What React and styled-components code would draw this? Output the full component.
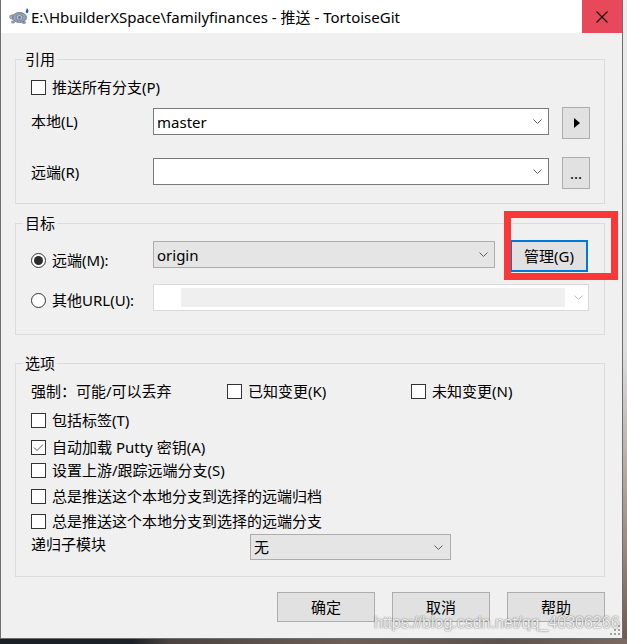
import React from "react";
import styled, { createGlobalStyle } from "styled-components";

const GlobalStyle = createGlobalStyle`
  html, body {
    margin: 0;
    padding: 0;
  }
  body {
    width: 627px;
    height: 644px;
    overflow: hidden;
    background: #1c2027;
    font-family: "Noto Sans", "Noto Sans CJK SC", sans-serif;
    color: #000;
  }
`;

const Screen = styled.div`
  width: 627px;
  height: 644px;
  display: flex;
  flex-direction: column;
`;

const Upper = styled.div`
  display: flex;
  height: 639px;
`;

/* desktop showing behind the dialog */
const EdgeStrip = styled.div`
  width: 4px;
  background: linear-gradient(to bottom, #ececec 0%, #dedede 55%, #9a8b82 85%, #6b5b53 100%);
`;

const BottomStrip = styled.div`
  flex: 1;
  background: linear-gradient(to right, #1a1e25 0%, #1d2128 21%, #4a4340 27%, #6d5e57 55%, #5d524d 80%, #7a6a62 100%);
`;

const Window = styled.div`
  position: relative;
  width: 623px;
  height: 639px;
  box-sizing: border-box;
  border: 1px solid #6e6e6e;
  border-top: none;
  background: #f0f0f0;
  display: flex;
  flex-direction: column;
`;

const TitleBar = styled.div`
  height: 33px;
  flex-shrink: 0;
  background: #fff;
  display: flex;
  align-items: center;
`;

const AppIcon = styled.svg`
  margin-left: 8px;
  flex-shrink: 0;
`;

const Title = styled.div`
  margin-left: 1px;
  font-size: 15px;
  line-height: 20px;
  white-space: nowrap;
`;

const CloseButton = styled.div`
  margin-left: auto;
  width: 40px;
  height: 33px;
  background: #e8495a;
  display: flex;
  align-items: center;
  justify-content: center;
`;

const Body = styled.div`
  flex: 1;
  padding: 16px 17px 0 14px;
  display: flex;
  flex-direction: column;
`;

const Group = styled.fieldset`
  margin: ${(p) => p.$mt}px 0 0;
  padding: 7px 14px ${(p) => p.$pb}px 15px;
  border: 1px solid #dcdcdc;
  min-width: 0;
`;

const Legend = styled.legend`
  margin-left: -8px;
  padding: 0 2px;
  font-size: 15px;
  line-height: 20px;
`;

const Row = styled.div`
  display: flex;
  align-items: ${(p) => p.$align || "center"};
  height: ${(p) => p.$h}px;
  margin-top: ${(p) => p.$mt || 0}px;
`;

const Text = styled.span`
  font-size: 15px;
  line-height: 20px;
  white-space: nowrap;
  margin-left: ${(p) => p.$ml || 0}px;
`;

const FieldLabel = styled.div`
  display: flex;
  align-items: center;
  width: ${(p) => p.$w}px;
  flex-shrink: 0;
  height: 20px;
  margin-top: ${(p) => p.$mt || 0}px;
  font-size: 15px;
  line-height: 20px;
  white-space: nowrap;
`;

const Cell = styled.div`
  display: flex;
  align-items: center;
  width: ${(p) => (p.$w ? `${p.$w}px` : "auto")};
  flex-shrink: 0;
`;

const Box = styled.span`
  box-sizing: border-box;
  width: 15px;
  height: 15px;
  flex-shrink: 0;
  border: 1px solid #333;
  background: #fff;
  display: flex;
  align-items: center;
  justify-content: center;
`;

const Radio = styled.span`
  box-sizing: border-box;
  width: 15px;
  height: 15px;
  flex-shrink: 0;
  border: 1px solid #333;
  border-radius: 50%;
  background: #fff;
  display: flex;
  align-items: center;
  justify-content: center;

  &::after {
    content: "";
    width: 9px;
    height: 9px;
    border-radius: 50%;
    background: ${(p) => (p.$on ? "#2b2b2b" : "transparent")};
  }
`;

const comboTones = {
  edit: { bg: "#fff", border: "#7a7a7a", arrow: "#606060" },
  list: { bg: "#e5e5e5", border: "#adadad", arrow: "#606060" },
  off: { bg: "#fff", border: "#d9d9d9", arrow: "#bcbcbc" },
};

const Combo = styled.div`
  box-sizing: border-box;
  width: ${(p) => p.$w}px;
  height: ${(p) => p.$h}px;
  margin-top: ${(p) => p.$mt || 0}px;
  flex-shrink: 0;
  border: 1px solid ${(p) => comboTones[p.$tone].border};
  background: ${(p) => comboTones[p.$tone].bg};
  display: flex;
  align-items: center;
  padding: 0 ${(p) => p.$pr || 6}px 0 3px;
  font-size: 15px;
  line-height: 20px;
`;

const ComboValue = styled.span`
  flex: 1;
`;

const ComboField = styled.span`
  align-self: stretch;
  margin: 3px 9px 3px 24px;
  flex: 1;
  background: #efefef;
`;

const Button = styled.div`
  box-sizing: border-box;
  width: ${(p) => p.$w}px;
  height: ${(p) => p.$h}px;
  margin-left: ${(p) => p.$ml || 0}px;
  flex-shrink: 0;
  background: #e1e1e1;
  border: ${(p) => (p.$default ? "2px solid #0078d7" : "1px solid #adadad")};
  display: flex;
  align-items: center;
  justify-content: center;
  font-size: 15px;
  line-height: 20px;
`;

const Highlighted = styled.div`
  position: relative;
  margin-left: 15px;
`;

const RedBox = styled.span`
  position: absolute;
  left: -6px;
  top: -29px;
  right: -30px;
  bottom: -8px;
  border: 7px solid #fa3838;
  pointer-events: none;
`;

const Actions = styled.div`
  display: flex;
  justify-content: flex-end;
  gap: 17px;
  margin-top: 15px;
`;

const Watermark = styled.div`
  position: absolute;
  left: 373px;
  top: 614px;
  font-family: "Liberation Sans", Arial, sans-serif;
  font-size: 16px;
  line-height: 18px;
  white-space: nowrap;
  color: rgba(255, 255, 255, 0.88);
  text-shadow: 0 0 1px rgba(60, 60, 60, 0.6), 0 0 2px rgba(60, 60, 60, 0.45);
  pointer-events: none;
`;

const Gripper = styled.svg`
  position: absolute;
  right: 1px;
  bottom: 2px;
`;

const Chevron = ({ color }) => (
  <svg width="9" height="5" viewBox="0 0 9 5">
    <polyline points="0.5,0.5 4.5,4.5 8.5,0.5" fill="none" stroke={color} strokeWidth="1" />
  </svg>
);

const Check = ({ checked }) => (
  <Box>
    {checked && (
      <svg width="13" height="13" viewBox="0 0 13 13">
        <polyline points="2,6.5 5,9.5 11,3.5" fill="none" stroke="#555" strokeWidth="1" />
      </svg>
    )}
  </Box>
);

const CheckRow = ({ mt, checked, children }) => (
  <Row $h={22} $mt={mt}>
    <Check checked={checked} />
    <Text $ml={6}>{children}</Text>
  </Row>
);

const Turtle = () => (
  <AppIcon width="21" height="19" viewBox="0 0 21 19">
    <ellipse cx="4" cy="15" rx="2" ry="1.6" fill="#8a97a8" />
    <ellipse cx="15" cy="15.5" rx="2" ry="1.6" fill="#8a97a8" />
    <ellipse cx="3.2" cy="10" rx="2.6" ry="2.2" fill="#a4b0bf" stroke="#6d7a8c" strokeWidth="0.6" />
    <ellipse cx="10.5" cy="10.5" rx="7" ry="5" fill="#94a2b6" stroke="#5f6d82" strokeWidth="0.8" />
    <path d="M7 9.5 L10.5 7 L14 9.5 L13 13 L8 13 Z" fill="#b7c2d1" stroke="#5f6d82" strokeWidth="0.6" />
    <circle cx="10.5" cy="10.5" r="1.4" fill="#6f7e94" />
    <path d="M18 1 C19.6 3 20.2 4.6 18.6 6 C17.2 6.6 16.2 5.2 17 3.6 Z" fill="#1f5fd8" />
  </AppIcon>
);

export default () => {
  return (
    <Screen>
      <GlobalStyle />
      <Upper>
        <Window>
          <TitleBar>
            <Turtle />
            <Title>E:\HbuilderXSpace\familyfinances - 推送 - TortoiseGit</Title>
            <CloseButton>
              <svg width="12" height="12" viewBox="0 0 12 12">
                <path d="M0.5 0.5 L11.5 11.5 M11.5 0.5 L0.5 11.5" stroke="#111" strokeWidth="1.1" />
              </svg>
            </CloseButton>
          </TitleBar>

          <Body>
            {/* 引用 */}
            <Group $mt={0} $pb={14}>
              <Legend>引用</Legend>
              <CheckRow mt={0}>推送所有分支(P)</CheckRow>
              <Row $h={32} $mt={9} $align="flex-start">
                <FieldLabel $w={122} $mt={4}>本地(L)</FieldLabel>
                <Combo $tone="edit" $w={396} $h={27} $mt={1}>
                  <ComboValue>master</ComboValue>
                  <Chevron color={comboTones.edit.arrow} />
                </Combo>
                <Button $w={28} $h={32} $ml={13}>
                  <svg width="6" height="10" viewBox="0 0 6 10" style={{ marginLeft: 2 }}>
                    <polygon points="0,0 6,5 0,10" fill="#000" />
                  </svg>
                </Button>
              </Row>
              <Row $h={32} $mt={18} $align="flex-start">
                <FieldLabel $w={122} $mt={5}>远端(R)</FieldLabel>
                <Combo $tone="edit" $w={396} $h={27} $mt={1}>
                  <ComboValue />
                  <Chevron color={comboTones.edit.arrow} />
                </Combo>
                <Button $w={28} $h={32} $ml={13}>...</Button>
              </Row>
            </Group>

            {/* 目标 */}
            <Group $mt={9} $pb={23}>
              <Legend>目标</Legend>
              <Row $h={32} $align="flex-start">
                <FieldLabel $w={122} $mt={10}>
                  <Radio $on />
                  <Text $ml={6}>远端(M):</Text>
                </FieldLabel>
                <Combo $tone="list" $w={342} $h={27} $mt={1}>
                  <ComboValue>origin</ComboValue>
                  <Chevron color={comboTones.list.arrow} />
                </Combo>
                <Highlighted>
                  <Button $w={78} $h={32} $default>管理(G)</Button>
                  <RedBox />
                </Highlighted>
              </Row>
              <Row $h={27} $mt={12} $align="flex-start">
                <FieldLabel $w={122} $mt={6}>
                  <Radio />
                  <Text $ml={6}>其他URL(U):</Text>
                </FieldLabel>
                <Combo $tone="off" $w={436} $h={27} $pr={5}>
                  <ComboField />
                  <Chevron color={comboTones.off.arrow} />
                </Combo>
              </Row>
            </Group>

            {/* 选项 */}
            <Group $mt={18} $pb={16}>
              <Legend>选项</Legend>
              <Row $h={22}>
                <Cell $w={196}>
                  <Text>强制：可能/可以丢弃</Text>
                </Cell>
                <Cell $w={184}>
                  <Check />
                  <Text $ml={6}>已知变更(K)</Text>
                </Cell>
                <Cell>
                  <Check />
                  <Text $ml={6}>未知变更(N)</Text>
                </Cell>
              </Row>
              <CheckRow mt={7}>包括标签(T)</CheckRow>
              <CheckRow mt={5} checked>自动加载 Putty 密钥(A)</CheckRow>
              <CheckRow mt={1}>设置上游/跟踪远端分支(S)</CheckRow>
              <CheckRow mt={4}>总是推送这个本地分支到选择的远端归档</CheckRow>
              <CheckRow mt={3}>总是推送这个本地分支到选择的远端分支</CheckRow>
              <Row $h={26} $mt={2} $align="flex-start">
                <FieldLabel $w={219}>递归子模块</FieldLabel>
                <Combo $tone="list" $w={201} $h={26} $pr={7}>
                  <ComboValue>无</ComboValue>
                  <Chevron color={comboTones.list.arrow} />
                </Combo>
              </Row>
            </Group>

            <Actions>
              <Button $w={98} $h={30}>确定</Button>
              <Button $w={98} $h={30}>取消</Button>
              <Button $w={98} $h={30}>帮助</Button>
            </Actions>
          </Body>

          <Watermark>https://blog.csdn.net/qq_40306266</Watermark>
          <Gripper width="11" height="11" viewBox="0 0 11 11">
            <g fill="#a0a0a0">
              <rect x="8" y="0" width="2" height="2" />
              <rect x="4" y="4" width="2" height="2" />
              <rect x="8" y="4" width="2" height="2" />
              <rect x="0" y="8" width="2" height="2" />
              <rect x="4" y="8" width="2" height="2" />
              <rect x="8" y="8" width="2" height="2" />
            </g>
          </Gripper>
        </Window>
        <EdgeStrip />
      </Upper>
      <BottomStrip />
    </Screen>
  );
};
